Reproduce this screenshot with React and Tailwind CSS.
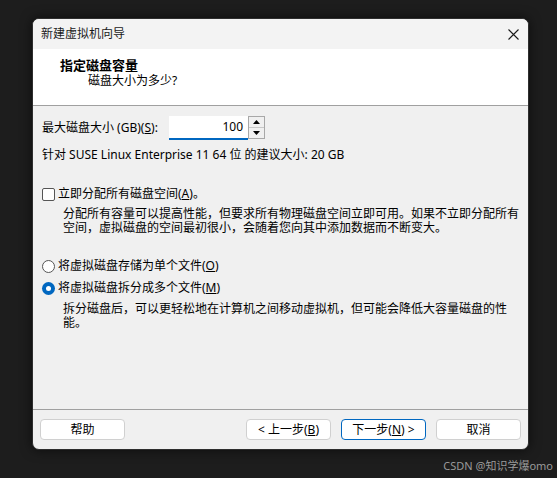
import React from "react";

const F = { fontFamily: '"Noto Sans", "Noto Sans CJK SC", sans-serif' };

function Btn({ children, primary }) {
  return (
    <div
      className={
        "w-[85px] h-[21px] flex items-center justify-center rounded-[4px] bg-white text-[12px] leading-[16px] text-black " +
        (primary ? "border border-[#0067c0]" : "border border-[#d0d0d0]")
      }
    >
      {children}
    </div>
  );
}

export default function App() {
  return (
    <div
      className="relative w-[557px] h-[478px] bg-[#1d1d1d] pt-[18px] pl-[32px] overflow-hidden"
      style={F}
    >
      <div className="w-[497px] h-[432px] rounded-[7px] overflow-hidden bg-[#f0f0f0] flex flex-col border border-[#2e2e2e] shadow-[0_0_12px_rgba(0,0,0,0.6)]">
        {/* title bar */}
        <div className="h-[30px] bg-[#f3f3f3] flex items-center justify-between pl-[8px] pr-[9px] shrink-0">
          <span className="text-[12px] leading-[16px] text-[#1a1a1a]">新建虚拟机向导</span>
          <svg width="11" height="11" viewBox="0 0 11 11">
            <path d="M0.5 0.5 L10.5 10.5 M10.5 0.5 L0.5 10.5" stroke="#1a1a1a" strokeWidth="1.1" fill="none" />
          </svg>
        </div>
        {/* header */}
        <div className="h-[57px] bg-white border-b border-[#a0a0a0] pt-[8px] shrink-0">
          <div className="pl-[27px] text-[13px] leading-[16px] font-bold text-black">指定磁盘容量</div>
          <div className="pl-[55px] text-[12px] leading-[16px] text-black">磁盘大小为多少?</div>
        </div>
        {/* content */}
        <div className="flex-1 pl-[9px] pt-[10px] text-[12px] text-black">
          <div className="flex items-center h-[24px]">
            <span className="leading-[16px] w-[127px] whitespace-nowrap">
              最大磁盘大小 (GB)(<u>S</u>):
            </span>
            <div className="w-[79px] h-[24px] bg-white border-b-2 border-[#0067c0] flex items-center justify-end pr-[5px] leading-[16px]">
              100
            </div>
            <div className="w-[17px] h-[23px] border border-[#a8a8a8] bg-[#f0f0f0] flex flex-col self-start">
              <div className="flex-1 flex items-center justify-center border-b border-[#c8c8c8]">
                <svg width="7" height="4" viewBox="0 0 7 4">
                  <path d="M3.5 0 L7 4 L0 4 Z" fill="#000" />
                </svg>
              </div>
              <div className="flex-1 flex items-center justify-center">
                <svg width="7" height="4" viewBox="0 0 7 4">
                  <path d="M0 0 L7 0 L3.5 4 Z" fill="#000" />
                </svg>
              </div>
            </div>
          </div>
          <div className="mt-[7px] leading-[16px]">
            针对 SUSE Linux Enterprise 11 64 位 的建议大小: 20 GB
          </div>

          <div className="mt-[23px] flex items-center leading-[16px]">
            <div className="w-[13px] h-[13px] border border-[#555] rounded-[2px] bg-white mr-[3px]" />
            <span>
              立即分配所有磁盘空间(<u>A</u>)。
            </span>
          </div>
          <div className="ml-[21px] mt-[5px] flex flex-col">
            <span className="leading-[14px]">
              分配所有容量可以提高性能，但要求所有物理磁盘空间立即可用。如果不立即分配所有
            </span>
            <span className="leading-[14px]">
              空间，虚拟磁盘的空间最初很小，会随着您向其中添加数据而不断变大。
            </span>
          </div>

          <div className="mt-[23px] flex items-center leading-[16px]">
            <div className="w-[13px] h-[13px] border border-[#555] rounded-full bg-white mr-[3px]" />
            <span>
              将虚拟磁盘存储为单个文件(<u>O</u>)
            </span>
          </div>
          <div className="mt-[6px] flex items-center leading-[16px]">
            <div className="w-[13px] h-[13px] rounded-full bg-[#0067c0] mr-[3px] flex items-center justify-center">
              <div className="w-[5px] h-[5px] rounded-full bg-white" />
            </div>
            <span>
              将虚拟磁盘拆分成多个文件(<u>M</u>)
            </span>
          </div>
          <div className="ml-[21px] mt-[6px] flex flex-col">
            <span className="leading-[14px]">
              拆分磁盘后，可以更轻松地在计算机之间移动虚拟机，但可能会降低大容量磁盘的性
            </span>
            <span className="leading-[14px]">能。</span>
          </div>
        </div>
        {/* footer */}
        <div className="h-[40px] border-t border-[#a0a0a0] flex items-start justify-between px-[7px] pt-[9px] shrink-0">
          <Btn>帮助</Btn>
          <div className="flex gap-[10px]">
            <Btn>
              &lt; 上一步(<u>B</u>)
            </Btn>
            <Btn primary>
              下一步(<u>N</u>) &gt;
            </Btn>
            <Btn>取消</Btn>
          </div>
        </div>
      </div>
      <div className="absolute right-[4px] top-[458px] text-[11px] leading-[16px] text-[#9a9a9a] whitespace-nowrap">
        CSDN @知识学爆omo
      </div>
    </div>
  );
}
